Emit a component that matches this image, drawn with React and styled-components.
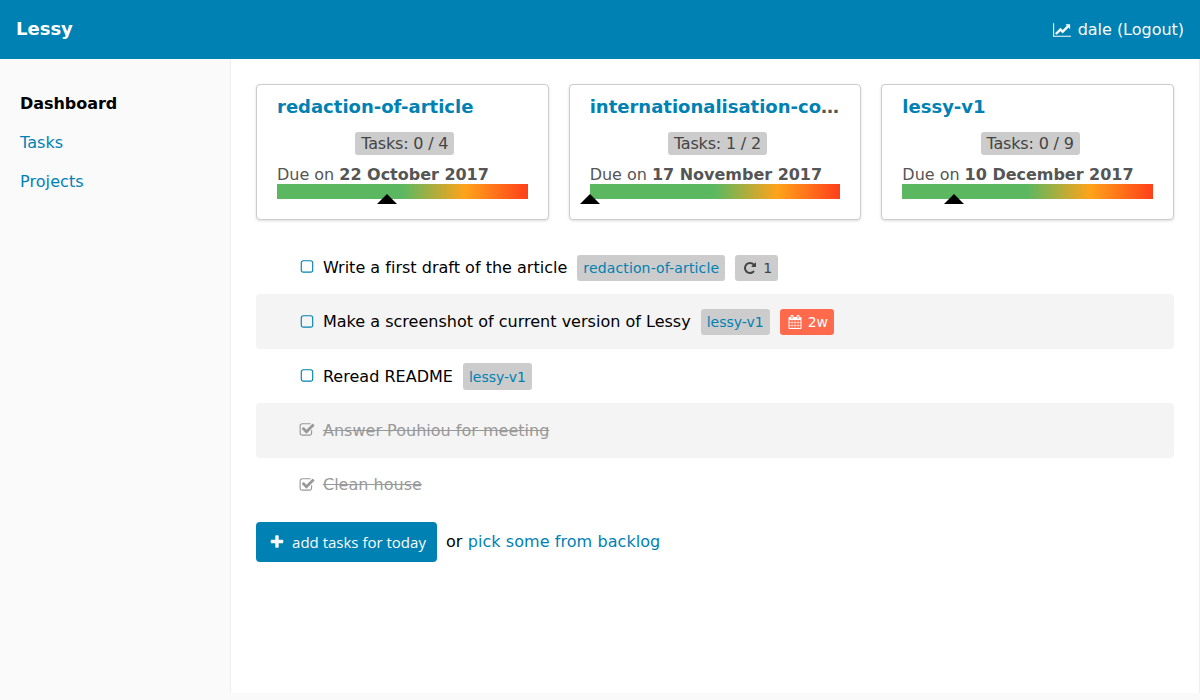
import React from 'react';
import styled, { createGlobalStyle, css } from 'styled-components';

const blue = '#0081b3';

const GlobalStyle = createGlobalStyle`
  *, *::before, *::after { box-sizing: border-box; }
  body {
    margin: 0;
    background: #fafafa;
    color: #000;
    font: 16px/24px "DejaVu Sans", sans-serif;
    overflow: hidden;
  }
  a { color: ${blue}; text-decoration: none; }
`;

const ICONS = {
  chart: {
    width: 2048,
    d: 'M2048 1536v128h-2048v-1536h128v1408h1920zm-128-1248v435q0 21-19.5 29.5t-35.5-7.5l-121-121-633 633q-10 10-23 10t-23-10l-233-233-416 416-192-192 585-585q10-10 23-10t23 10l233 233 464-464-121-121q-16-16-7.5-35.5t29.5-19.5h435q14 0 23 9t9 23z',
  },
  square: {
    width: 1792,
    d: 'M1312 256h-832q-66 0-113 47t-47 113v832q0 66 47 113t113 47h832q66 0 113-47t47-113v-832q0-66-47-113t-113-47zm288 160v832q0 119-84.5 203.5t-203.5 84.5h-832q-119 0-203.5-84.5t-84.5-203.5v-832q0-119 84.5-203.5t203.5-84.5h832q119 0 203.5 84.5t84.5 203.5z',
  },
  checked: {
    width: 1792,
    d: 'M1472 930v318q0 119-84.5 203.5t-203.5 84.5h-832q-119 0-203.5-84.5t-84.5-203.5v-832q0-119 84.5-203.5t203.5-84.5h832q63 0 117 25 15 7 18 23 3 17-9 29l-49 49q-10 10-23 10-3 0-9-2-23-6-45-6h-832q-66 0-113 47t-47 113v832q0 66 47 113t113 47h832q66 0 113-47t47-113v-254q0-13 9-22l64-64q10-10 23-10 6 0 12 3 20 8 20 29zm231-489l-814 814q-24 24-57 24t-57-24l-430-430q-24-24-24-57t24-57l110-110q24-24 57-24t57 24l263 263 647-647q24-24 57-24t57 24l110 110q24 24 24 57t-24 57z',
  },
  repeat: {
    width: 1792,
    d: 'M1664 256v448q0 26-19 45t-45 19h-448q-42 0-59-40-17-39 14-69l138-138q-148-137-349-137-104 0-198.5 40.5t-163.5 109.5-109.5 163.5-40.5 198.5 40.5 198.5 109.5 163.5 163.5 109.5 198.5 40.5q119 0 225-52t179-147q7-10 23-12 15 0 25 9l137 138q9 8 9.5 20.5t-7.5 22.5q-109 132-264 204.5t-327 72.5q-156 0-298-61t-245-164-164-245-61-298 61-298 164-245 245-164 298-61q147 0 284.5 55.5t244.5 156.5l130-129q29-31 70-14 39 17 39 59z',
  },
  calendar: {
    width: 1792,
    d: 'M192 1664h288v-288h-288v288zm352 0h320v-288h-320v288zm-352-352h288v-320h-288v320zm352 0h320v-320h-320v320zm-352-384h288v-288h-288v288zm736 736h320v-288h-320v288zm-384-736h320v-288h-320v288zm768 736h288v-288h-288v288zm-384-352h320v-320h-320v320zm-352-864v-288q0-13-9.5-22.5t-22.5-9.5h-64q-13 0-22.5 9.5t-9.5 22.5v288q0 13 9.5 22.5t22.5 9.5h64q13 0 22.5-9.5t9.5-22.5zm736 864h288v-320h-288v320zm-384-384h320v-288h-320v288zm384 0h288v-288h-288v288zm32-480v-288q0-13-9.5-22.5t-22.5-9.5h-64q-13 0-22.5 9.5t-9.5 22.5v288q0 13 9.5 22.5t22.5 9.5h64q13 0 22.5-9.5t9.5-22.5zm384-64v1280q0 52-38 90t-90 38h-1408q-52 0-90-38t-38-90v-1280q0-52 38-90t90-38h128v-96q0-66 47-113t113-47h64q66 0 113 47t47 113v96h384v-96q0-66 47-113t113-47h64q66 0 113 47t47 113v96h128q52 0 90 38t38 90z',
  },
  plus: {
    width: 1792,
    d: 'M1600 736v192q0 40-28 68t-68 28h-416v416q0 40-28 68t-68 28h-192q-40 0-68-28t-28-68v-416h-416q-40 0-68-28t-28-68v-192q0-40 28-68t68-28h416v-416q0-40 28-68t68-28h192q40 0 68 28t28 68v416h416q40 0 68 28t28 68z',
  },
};

const IconSvg = styled.svg`
  display: block;
  flex: none;
  height: 1em;
  width: ${(p) => p.$ratio}em;
  fill: currentColor;
`;

function Icon({ name }) {
  const { width, d } = ICONS[name];
  return (
    <IconSvg viewBox={`0 0 ${width} 1792`} $ratio={width / 1792} aria-hidden="true">
      <path d={d} />
    </IconSvg>
  );
}

const IconBox = styled.span`
  display: flex;
  justify-content: center;
  flex: none;
  width: 1.2857em;
`;

const Header = styled.header`
  display: flex;
  align-items: center;
  justify-content: space-between;
  height: 59px;
  padding: 0 16px;
  background: ${blue};
  color: #fff;
`;

const Brand = styled.h1`
  margin: 0 0 2px;
  font-size: 18px;
  line-height: 24px;
`;

const UserMenu = styled.a`
  && { color: #fafafa; }
  display: flex;
  align-items: center;
  gap: 6.5px;
  letter-spacing: -0.02px;
`;

const Body = styled.div`
  display: flex;
  height: 634px;
`;

const Sidebar = styled.nav`
  display: flex;
  flex-direction: column;
  gap: 15px;
  flex: none;
  width: 230px;
  padding: 33px 20px;
`;

const NavItem = styled.a`
  letter-spacing: 0.08px;
  ${(p) => p.$active && css`
    && { color: #000; }
    font-weight: bold;
    letter-spacing: -0.04px;
  `}
`;

const Main = styled.main`
  flex: 1;
  min-width: 0;
  padding: 25px;
  background: #fff;
  border: solid #eee;
  border-width: 0 1px;
`;

const Cards = styled.section`
  display: grid;
  grid-template-columns: repeat(3, minmax(0, 1fr));
  gap: 20px;
  margin-bottom: 20px;
`;

const CardBox = styled.article`
  display: flex;
  flex-direction: column;
  height: 136px;
  padding: 10px 20px;
  border: 1px solid #ccc;
  border-radius: 4px;
  background: #fff;
  box-shadow: 0 1px 3px #ddd;
  color: #555;
`;

const CardTitle = styled.h2`
  margin: 0 0 13px;
  font-size: 18px;
  line-height: 24px;
  overflow: hidden;
  white-space: nowrap;
  text-overflow: ellipsis;
`;

const Count = styled.span`
  align-self: center;
  margin-left: 4.9px;
  padding: 0 6px;
  border-radius: 3px;
  background: #ccc;
  color: #444;
  line-height: 23px;
  letter-spacing: -0.18px;
`;

const Due = styled.div`
  margin-top: 10px;
  line-height: 19px;
  letter-spacing: -0.02px;
`;

const Timeline = styled.div`
  position: relative;
  height: 15px;
  background: linear-gradient(to right, #5cb860 50%, #ffa31a 75%, #ff3f1a);
`;

const Marker = styled.span`
  position: absolute;
  bottom: -5px;
  border: solid transparent;
  border-width: 0 10px 10px;
  border-bottom-color: #000;
  transform: translateX(-50%);
`;

const TaskList = styled.ul`
  margin: 0 0 10px;
  padding: 0;
  list-style: none;
`;

const TaskRow = styled.li`
  display: flex;
  align-items: center;
  height: 54.4px;
  padding-left: 41px;
  border-radius: 4px;
  &:nth-child(even) { background: #f4f4f4; }
`;

const Check = styled(IconBox)`
  margin-right: 5.4px;
  color: ${(p) => (p.$done ? '#999' : blue)};
`;

const TaskLabel = styled.span`
  margin-top: 1.2px;
  letter-spacing: 0.015px;
  ${(p) => p.$done && css`
    color: #999;
    text-decoration: line-through;
  `}
`;

const Tag = styled.span`
  display: flex;
  align-items: center;
  gap: 4px;
  height: 26.3px;
  margin: 1.1px 0 0 10px;
  padding: 0 6px;
  border-radius: 3px;
  background: ${(p) => (p.$late ? '#ff6a4d' : '#ccc')};
  color: ${(p) => (p.$late ? '#fff' : '#444')};
  font-size: 14px;
`;

const TagLink = styled.a`
  letter-spacing: ${(p) => (p.$wide ? '0.14px' : 'normal')};
`;

const Actions = styled.div`
  display: flex;
  align-items: center;
  gap: 9px;
`;

const Alternative = styled.span`
  letter-spacing: 0.07px;
`;

const Button = styled.button`
  display: flex;
  align-items: center;
  gap: 4.5px;
  width: 181px;
  height: 40px;
  padding: 0 11px;
  border: 0;
  border-radius: 4px;
  background: ${blue};
  color: #fafafa;
  font-size: 16px;
  white-space: nowrap;
`;

const ButtonLabel = styled.span`
  font: 15px/24px "Open Sans", "Noto Sans", sans-serif;
`;

const projects = [
  { name: 'redaction-of-article', tasks: '0 / 4', due: '22 October 2017', progress: 43.9 },
  { name: 'internationalisation-code', tasks: '1 / 2', due: '17 November 2017', progress: 0 },
  { name: 'lessy-v1', tasks: '0 / 9', due: '10 December 2017', progress: 20.8 },
];

const tasks = [
  { label: 'Write a first draft of the article', project: 'redaction-of-article', repeats: 1 },
  { label: 'Make a screenshot of current version of Lessy', project: 'lessy-v1', late: '2w' },
  { label: 'Reread README', project: 'lessy-v1' },
  { label: 'Answer Pouhiou for meeting', done: true },
  { label: 'Clean house', done: true },
];

function ProjectCard({ name, tasks: count, due, progress }) {
  return (
    <CardBox>
      <CardTitle><a href="#">{name}</a></CardTitle>
      <Count>Tasks: {count}</Count>
      <Due>Due on <strong>{due}</strong></Due>
      <Timeline><Marker style={{ left: `${progress}%` }} /></Timeline>
    </CardBox>
  );
}

function Task({ label, project, repeats, late, done }) {
  return (
    <TaskRow>
      <Check $done={done}><Icon name={done ? 'checked' : 'square'} /></Check>
      <TaskLabel $done={done}>{label}</TaskLabel>
      {project && <Tag><TagLink href="#" $wide={project.length > 10}>{project}</TagLink></Tag>}
      {repeats && <Tag><IconBox><Icon name="repeat" /></IconBox>{repeats}</Tag>}
      {late && <Tag $late><IconBox><Icon name="calendar" /></IconBox>{late}</Tag>}
    </TaskRow>
  );
}

export default function App() {
  return (
    <>
      <GlobalStyle />
      <Header>
        <Brand>Lessy</Brand>
        <UserMenu href="#"><Icon name="chart" />dale (Logout)</UserMenu>
      </Header>
      <Body>
        <Sidebar>
          <NavItem href="#" $active>Dashboard</NavItem>
          <NavItem href="#">Tasks</NavItem>
          <NavItem href="#">Projects</NavItem>
        </Sidebar>
        <Main>
          <Cards>{projects.map((p) => <ProjectCard key={p.name} {...p} />)}</Cards>
          <TaskList>{tasks.map((t) => <Task key={t.label} {...t} />)}</TaskList>
          <Actions>
            <Button>
              <IconBox><Icon name="plus" /></IconBox>
              <ButtonLabel>add tasks for today</ButtonLabel>
            </Button>
            <Alternative>or <a href="#">pick some from backlog</a></Alternative>
          </Actions>
        </Main>
      </Body>
    </>
  );
}
